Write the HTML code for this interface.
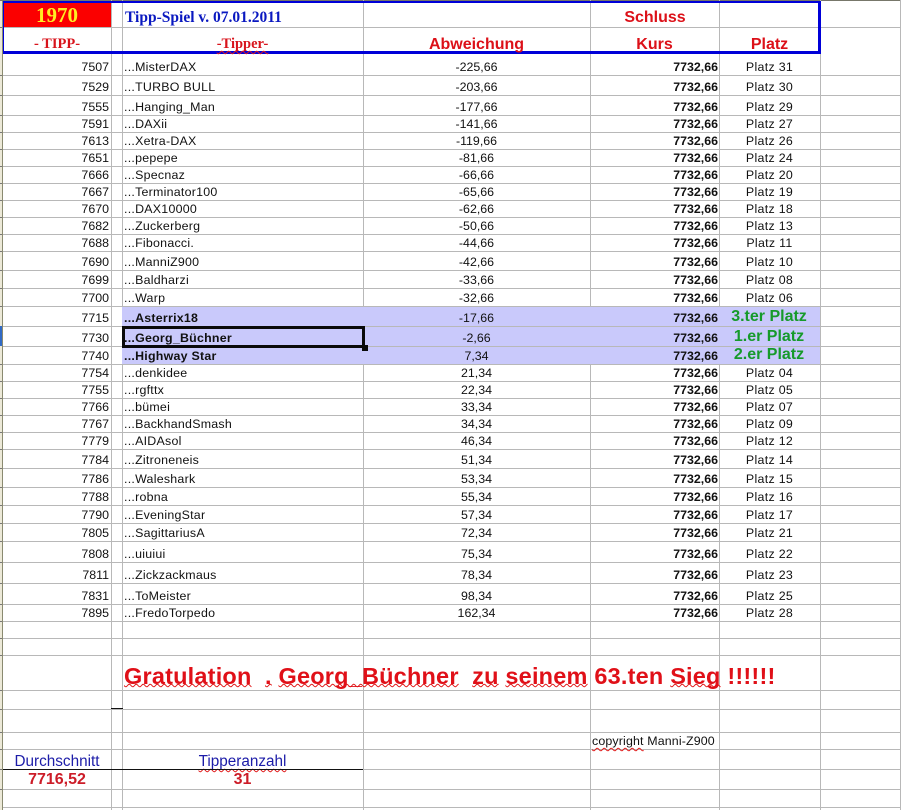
<!DOCTYPE html>
<html><head><meta charset="utf-8"><style>
html,body{margin:0;padding:0;background:#fff}
#p{position:relative;width:901px;height:810px;overflow:hidden;background:#fff;font-family:"Liberation Sans",Arial,sans-serif;color:#111}
.h,.v,.x{position:absolute}
.h{left:3px;width:898px;height:1px;background:#b8b8b8}
.v{top:0;width:1px;height:810px;background:#b8b8b8}
.r{position:absolute;left:0;width:901px;font-size:12.4px;line-height:14px}
.r span{position:absolute;bottom:1px;white-space:pre}
.a{right:792px}
.b{left:124px;letter-spacing:.25px}
.c{left:363px;width:227px;text-align:center}
.d{right:183px;font-weight:bold}
.e{left:719px;width:101px;text-align:center;letter-spacing:.3px}
.t{position:absolute;white-space:pre;text-align:center}
.red{color:#dc1018;font-weight:bold;font-size:16px;line-height:18px}
.ser{font-family:"Liberation Serif","Times New Roman",serif;font-weight:bold}
.w{text-decoration:underline wavy #e01818 1px;text-underline-offset:2px;text-decoration-skip-ink:none}
.gr .w{text-underline-offset:-1px}
.g{color:#169a2a;font-weight:bold;font-size:16px;line-height:18px;left:719px;width:100px}
.k{position:absolute;left:0;width:2px;height:1px;background:#777}
</style></head><body><div id="p">
<div class="x" style="left:0;top:0;width:2px;height:810px;background:#ece9d8"></div>
<div class="x" style="left:2px;top:0;width:1px;height:810px;background:#8a8a70"></div>
<div class="x" style="left:0;top:0;width:901px;height:1px;background:#77776a"></div>
<div class="x" style="left:0;top:326px;width:2px;height:20px;background:#316ac5"></div>

<div class="v" style="left:111px"></div><div class="v" style="left:122px"></div><div class="v" style="left:363px"></div><div class="v" style="left:590px"></div><div class="v" style="left:719px"></div><div class="v" style="left:820px"></div><div class="v" style="left:900px"></div>

<div class="x" style="left:122px;top:306px;width:698px;height:58px;background:#c9c9fb"></div>

<div class="h" style="top:27px"></div><div class="h" style="top:75px"></div><div class="h" style="top:95px"></div><div class="h" style="top:115px"></div><div class="h" style="top:132px"></div><div class="h" style="top:149px"></div><div class="h" style="top:166px"></div><div class="h" style="top:183px"></div><div class="h" style="top:200px"></div><div class="h" style="top:217px"></div><div class="h" style="top:234px"></div><div class="h" style="top:251px"></div><div class="h" style="top:270px"></div><div class="h" style="top:288px"></div><div class="h" style="top:306px"></div><div class="h" style="top:326px"></div><div class="h" style="top:346px"></div><div class="h" style="top:364px"></div><div class="h" style="top:381px"></div><div class="h" style="top:398px"></div><div class="h" style="top:415px"></div><div class="h" style="top:432px"></div><div class="h" style="top:449px"></div><div class="h" style="top:468px"></div><div class="h" style="top:487px"></div><div class="h" style="top:505px"></div><div class="h" style="top:523px"></div><div class="h" style="top:541px"></div><div class="h" style="top:562px"></div><div class="h" style="top:583px"></div><div class="h" style="top:604px"></div><div class="h" style="top:621px"></div><div class="h" style="top:638px"></div><div class="h" style="top:655px"></div><div class="h" style="top:690px"></div><div class="h" style="top:709px"></div><div class="h" style="top:732px"></div><div class="h" style="top:749px"></div><div class="h" style="top:769px"></div><div class="h" style="top:789px"></div><div class="h" style="top:807px"></div>

<div class="k" style="top:27px"></div><div class="k" style="top:75px"></div><div class="k" style="top:95px"></div><div class="k" style="top:115px"></div><div class="k" style="top:132px"></div><div class="k" style="top:149px"></div><div class="k" style="top:166px"></div><div class="k" style="top:183px"></div><div class="k" style="top:200px"></div><div class="k" style="top:217px"></div><div class="k" style="top:234px"></div><div class="k" style="top:251px"></div><div class="k" style="top:270px"></div><div class="k" style="top:288px"></div><div class="k" style="top:306px"></div><div class="k" style="top:364px"></div><div class="k" style="top:381px"></div><div class="k" style="top:398px"></div><div class="k" style="top:415px"></div><div class="k" style="top:432px"></div><div class="k" style="top:449px"></div><div class="k" style="top:468px"></div><div class="k" style="top:487px"></div><div class="k" style="top:505px"></div><div class="k" style="top:523px"></div><div class="k" style="top:541px"></div><div class="k" style="top:562px"></div><div class="k" style="top:583px"></div><div class="k" style="top:604px"></div><div class="k" style="top:621px"></div><div class="k" style="top:638px"></div><div class="k" style="top:655px"></div><div class="k" style="top:690px"></div><div class="k" style="top:709px"></div><div class="k" style="top:732px"></div><div class="k" style="top:749px"></div><div class="k" style="top:769px"></div><div class="k" style="top:789px"></div>

<div class="x" style="left:3px;top:3px;width:108px;height:24px;background:#fb0000"></div>
<div class="x" style="left:3px;top:1px;width:818px;height:53px;box-sizing:border-box;border:1px solid #0000d8;border-width:2px 3px 3px 1px"></div>

<div class="t ser" style="left:3px;width:108px;top:3px;font-size:21px;line-height:24px;color:#ffee22">1970</div>
<div class="t ser" style="left:125px;top:9px;font-size:15.5px;line-height:17px;color:#0a18c0">Tipp-Spiel v. 07.01.2011</div>
<div class="t ser" style="left:3px;width:108px;top:36px;font-size:14.5px;line-height:17px;color:#d8141c">- TIPP-</div>
<div class="t ser" style="left:122px;width:241px;top:36px;font-size:14.5px;line-height:17px;color:#d8141c"><span class="w">-Tipper-</span></div>
<div class="t red" style="left:590px;width:130px;top:9px">Schluss</div>
<div class="t red" style="left:363px;width:227px;top:36px">Abweichung</div>
<div class="t red" style="left:590px;width:129px;top:36px">Kurs</div>
<div class="t red" style="left:719px;width:101px;top:36px">Platz</div>

<div class="r" style="top:54px;height:21px"><span class="a">7507</span><span class="b">...MisterDAX</span><span class="c">-225,66</span><span class="d">7732,66</span><span class="e">Platz 31</span></div>
<div class="r" style="top:76px;height:19px"><span class="a">7529</span><span class="b">...TURBO BULL</span><span class="c">-203,66</span><span class="d">7732,66</span><span class="e">Platz 30</span></div>
<div class="r" style="top:96px;height:19px"><span class="a">7555</span><span class="b">...Hanging_Man</span><span class="c">-177,66</span><span class="d">7732,66</span><span class="e">Platz 29</span></div>
<div class="r" style="top:116px;height:16px"><span class="a">7591</span><span class="b">...DAXii</span><span class="c">-141,66</span><span class="d">7732,66</span><span class="e">Platz 27</span></div>
<div class="r" style="top:133px;height:16px"><span class="a">7613</span><span class="b">...Xetra-DAX</span><span class="c">-119,66</span><span class="d">7732,66</span><span class="e">Platz 26</span></div>
<div class="r" style="top:150px;height:16px"><span class="a">7651</span><span class="b">...pepepe</span><span class="c">-81,66</span><span class="d">7732,66</span><span class="e">Platz 24</span></div>
<div class="r" style="top:167px;height:16px"><span class="a">7666</span><span class="b">...Specnaz</span><span class="c">-66,66</span><span class="d">7732,66</span><span class="e">Platz 20</span></div>
<div class="r" style="top:184px;height:16px"><span class="a">7667</span><span class="b">...Terminator100</span><span class="c">-65,66</span><span class="d">7732,66</span><span class="e">Platz 19</span></div>
<div class="r" style="top:201px;height:16px"><span class="a">7670</span><span class="b">...DAX10000</span><span class="c">-62,66</span><span class="d">7732,66</span><span class="e">Platz 18</span></div>
<div class="r" style="top:218px;height:16px"><span class="a">7682</span><span class="b">...Zuckerberg</span><span class="c">-50,66</span><span class="d">7732,66</span><span class="e">Platz 13</span></div>
<div class="r" style="top:235px;height:16px"><span class="a">7688</span><span class="b">...Fibonacci.</span><span class="c">-44,66</span><span class="d">7732,66</span><span class="e">Platz 11</span></div>
<div class="r" style="top:252px;height:18px"><span class="a">7690</span><span class="b">...ManniZ900</span><span class="c">-42,66</span><span class="d">7732,66</span><span class="e">Platz 10</span></div>
<div class="r" style="top:271px;height:17px"><span class="a">7699</span><span class="b">...Baldharzi</span><span class="c">-33,66</span><span class="d">7732,66</span><span class="e">Platz 08</span></div>
<div class="r" style="top:289px;height:17px"><span class="a">7700</span><span class="b">...Warp</span><span class="c">-32,66</span><span class="d">7732,66</span><span class="e">Platz 06</span></div>
<div class="r" style="top:307px;height:19px"><span class="a">7715</span><span class="b" style="font-weight:bold">...Asterrix18</span><span class="c">-17,66</span><span class="d">7732,66</span></div>
<div class="r" style="top:327px;height:19px"><span class="a">7730</span><span class="b" style="font-weight:bold">...Georg_Büchner</span><span class="c">-2,66</span><span class="d">7732,66</span></div>
<div class="r" style="top:347px;height:17px"><span class="a">7740</span><span class="b" style="font-weight:bold">...Highway Star</span><span class="c">7,34</span><span class="d">7732,66</span></div>
<div class="r" style="top:365px;height:16px"><span class="a">7754</span><span class="b">...denkidee</span><span class="c">21,34</span><span class="d">7732,66</span><span class="e">Platz 04</span></div>
<div class="r" style="top:382px;height:16px"><span class="a">7755</span><span class="b">...rgfttx</span><span class="c">22,34</span><span class="d">7732,66</span><span class="e">Platz 05</span></div>
<div class="r" style="top:399px;height:16px"><span class="a">7766</span><span class="b">...bümei</span><span class="c">33,34</span><span class="d">7732,66</span><span class="e">Platz 07</span></div>
<div class="r" style="top:416px;height:16px"><span class="a">7767</span><span class="b">...BackhandSmash</span><span class="c">34,34</span><span class="d">7732,66</span><span class="e">Platz 09</span></div>
<div class="r" style="top:433px;height:16px"><span class="a">7779</span><span class="b">...AIDAsol</span><span class="c">46,34</span><span class="d">7732,66</span><span class="e">Platz 12</span></div>
<div class="r" style="top:450px;height:18px"><span class="a">7784</span><span class="b">...Zitroneneis</span><span class="c">51,34</span><span class="d">7732,66</span><span class="e">Platz 14</span></div>
<div class="r" style="top:469px;height:18px"><span class="a">7786</span><span class="b">...Waleshark</span><span class="c">53,34</span><span class="d">7732,66</span><span class="e">Platz 15</span></div>
<div class="r" style="top:488px;height:17px"><span class="a">7788</span><span class="b">...robna</span><span class="c">55,34</span><span class="d">7732,66</span><span class="e">Platz 16</span></div>
<div class="r" style="top:506px;height:17px"><span class="a">7790</span><span class="b">...EveningStar</span><span class="c">57,34</span><span class="d">7732,66</span><span class="e">Platz 17</span></div>
<div class="r" style="top:524px;height:17px"><span class="a">7805</span><span class="b">...SagittariusA</span><span class="c">72,34</span><span class="d">7732,66</span><span class="e">Platz 21</span></div>
<div class="r" style="top:542px;height:20px"><span class="a">7808</span><span class="b">...uiuiui</span><span class="c">75,34</span><span class="d">7732,66</span><span class="e">Platz 22</span></div>
<div class="r" style="top:563px;height:20px"><span class="a">7811</span><span class="b">...Zickzackmaus</span><span class="c">78,34</span><span class="d">7732,66</span><span class="e">Platz 23</span></div>
<div class="r" style="top:584px;height:20px"><span class="a">7831</span><span class="b">...ToMeister</span><span class="c">98,34</span><span class="d">7732,66</span><span class="e">Platz 25</span></div>
<div class="r" style="top:605px;height:16px"><span class="a">7895</span><span class="b">...FredoTorpedo</span><span class="c">162,34</span><span class="d">7732,66</span><span class="e">Platz 28</span></div>

<div class="t g" style="top:308px">3.ter Platz</div>
<div class="t g" style="top:328px">1.er Platz</div>
<div class="t g" style="top:346px">2.er Platz</div>

<div class="x" style="left:122px;top:326px;width:243px;height:22px;box-sizing:border-box;border:3px solid #0a0a0a"></div>
<div class="x" style="left:362px;top:345px;width:6px;height:6px;background:#0a0a0a"></div>

<div class="t gr" style="left:124px;top:662px;font-size:23.5px;line-height:28px;font-weight:bold;letter-spacing:.2px;color:#e01018"><span class="w">Gratulation</span>  <span class="w">.</span> <span class="w">Georg_Büchner</span>  <span class="w">zu</span> <span class="w">seinem</span> 63.ten <span class="w">Sieg</span> !!!!!!</div>

<div class="x" style="left:111px;top:708px;width:12px;height:1px;background:#111"></div>
<div class="t" style="left:592px;top:734px;font-size:12.4px;line-height:14px;letter-spacing:.15px"><span class="w">copyright</span> Manni-Z900</div>

<div class="t" style="left:3px;width:108px;top:753px;font-size:15.3px;line-height:17px;color:#1c1ca8">Durchschnitt</div>
<div class="t" style="left:122px;width:241px;top:753px;font-size:15.3px;line-height:17px;color:#1c1ca8"><span class="w">Tipperanzahl</span></div>
<div class="x" style="left:3px;top:769px;width:360px;height:1px;background:#111"></div>
<div class="t red" style="left:3px;width:108px;top:771px;color:#cc1c28">7716,52</div>
<div class="t red" style="left:122px;width:241px;top:771px;color:#cc1c28">31</div>
</div></body></html>
